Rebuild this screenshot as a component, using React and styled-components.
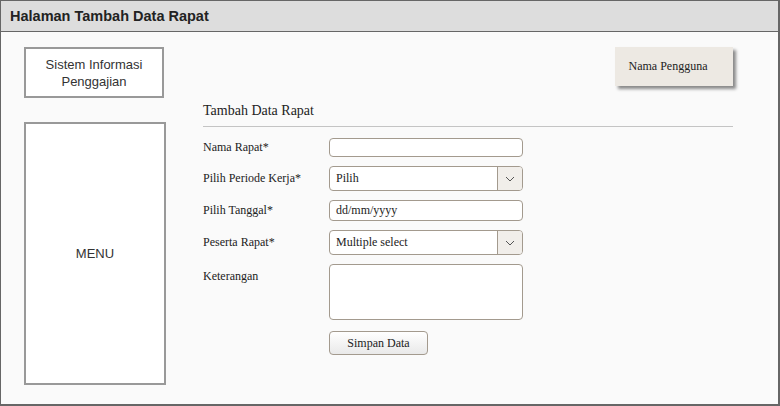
import React from 'react';
import styled, {createGlobalStyle} from 'styled-components';

const GlobalStyle = createGlobalStyle`
body {
  margin: 0;
  background: #ffffff;
}
`;

const Frame = styled.div`
width: 780px;
height: 406px;
box-sizing: border-box;
border: 1px solid #666666;
border-right-width: 2px;
border-bottom-width: 2px;
background: #fafafa;
display: flex;
flex-direction: column;
font-family: "Liberation Serif", serif;
color: #222222;
`;

const TitleBar = styled.div`
height: 30px;
flex: none;
background: #dddddd;
border-bottom: 1px solid #666666;
display: flex;
align-items: center;
padding-left: 9px;
font-family: "Liberation Sans", Arial, sans-serif;
font-weight: bold;
font-size: 14.5px;
color: #222222;
`;

const Body = styled.div`
flex: 1;
display: grid;
grid-template-columns: 142px 1fr;
column-gap: 37px;
padding: 15px 45px 19px 23px;
min-height: 0;
`;

const Sidebar = styled.div`
display: flex;
flex-direction: column;
gap: 24px;
`;

const SideBox = styled.div`
box-sizing: border-box;
width: ${props => props.wide ? '142px' : '140px'};
height: ${props => props.grow ? 'auto' : '51px'};
flex: ${props => props.grow ? 1 : 'none'};
background: #ffffff;
border: 2px solid #999999;
display: flex;
align-items: center;
justify-content: center;
text-align: center;
font-family: "Liberation Sans", Arial, sans-serif;
font-size: 13px;
line-height: 17px;
color: #333333;
`;

const Main = styled.div`
display: flex;
flex-direction: column;
`;

const UserRow = styled.div`
display: flex;
justify-content: flex-end;
`;

const UserButton = styled.div`
box-sizing: border-box;
width: 118px;
height: 39px;
padding-right: 12px;
background: #ede9e3;
box-shadow: 3px 3px 3px #8a8a8a;
display: flex;
align-items: center;
justify-content: center;
font-size: 12px;
color: #222222;
`;

const Heading = styled.div`
margin-top: 16px;
font-size: 14px;
line-height: 17px;
padding-bottom: 7px;
border-bottom: 1px solid #c4c4c4;
color: #222222;
`;

const Form = styled.div`
margin-top: 11px;
display: grid;
grid-template-columns: 126px 194px;
row-gap: 9px;
`;

const Label = styled.div`
font-size: 12px;
display: flex;
align-items: ${props => props.top ? 'flex-start' : 'center'};
padding-top: ${props => props.top ? '5px' : '0'};
color: #222222;
`;

const Field = styled.div`
box-sizing: border-box;
height: ${props => props.h}px;
background: #ffffff;
border: 1px solid #a39a8e;
border-radius: 4px;
display: flex;
align-items: center;
overflow: hidden;
font-size: 12px;
color: #222222;
`;

const FieldText = styled.span`
flex: 1;
padding-left: 6px;
`;

const Arrow = styled.div`
width: 24px;
align-self: stretch;
background: #f1eeea;
border-left: 1px solid #a39a8e;
display: flex;
align-items: center;
justify-content: center;
`;

const SubmitButton = styled.div`
grid-column: 2;
margin-top: 2px;
box-sizing: border-box;
width: 99px;
height: 24px;
border: 1px solid #a39a8e;
border-radius: 4px;
background: linear-gradient(#ffffff, #e9e9e9);
display: flex;
align-items: center;
justify-content: center;
font-size: 12px;
color: #222222;
`;

function Chevron(){
    return (
        <svg width="10" height="6" viewBox="0 0 10 6">
            <path d="M1 1 L5 5 L9 1" fill="none" stroke="#555" strokeWidth="1"/>
        </svg>
    );
}

function Select({text}){
    return (
        <Field h={25}>
            <FieldText>{text}</FieldText>
            <Arrow><Chevron/></Arrow>
        </Field>
    );
}

export default function App(){
    return (
        <>
        <GlobalStyle/>
        <Frame>
            <TitleBar>Halaman Tambah Data Rapat</TitleBar>
            <Body>
                <Sidebar>
                    <SideBox>Sistem Informasi<br/>Penggajian</SideBox>
                    <SideBox wide grow>MENU</SideBox>
                </Sidebar>
                <Main>
                    <UserRow>
                        <UserButton>Nama Pengguna</UserButton>
                    </UserRow>
                    <Heading>Tambah Data Rapat</Heading>
                    <Form>
                        <Label>Nama Rapat*</Label>
                        <Field h={19}/>
                        <Label>Pilih Periode Kerja*</Label>
                        <Select text="Pilih"/>
                        <Label>Pilih Tanggal*</Label>
                        <Field h={21}><FieldText>dd/mm/yyyy</FieldText></Field>
                        <Label>Peserta Rapat*</Label>
                        <Select text="Multiple select"/>
                        <Label top>Keterangan</Label>
                        <Field h={56}/>
                        <SubmitButton>Simpan Data</SubmitButton>
                    </Form>
                </Main>
            </Body>
        </Frame>
        </>
    );
}
